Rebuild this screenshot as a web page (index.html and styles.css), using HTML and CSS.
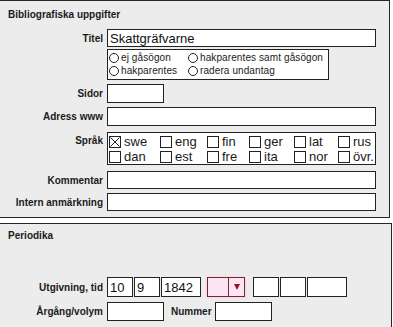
FILE: index.html
```html
<!DOCTYPE html>
<html lang="sv">
<head>
<meta charset="utf-8">
<title>Bibliografiska uppgifter</title>
<link rel="stylesheet" href="styles.css">
</head>
<body>
<section class="panel panel-biblio">
  <h2 class="panel-title">Bibliografiska uppgifter</h2>

  <div class="row row-titel">
    <label class="lbl">Titel</label>
    <input class="txt w-full h18" type="text" value="Skattgräfvarne">
  </div>

  <div class="row row-radio">
    <span class="lbl"></span>
    <div class="optbox radios">
      <label class="opt"><span class="radio"></span>ej gåsögon</label>
      <label class="opt"><span class="radio"></span>hakparentes samt gåsögon</label>
      <label class="opt"><span class="radio"></span>hakparentes</label>
      <label class="opt"><span class="radio"></span>radera undantag</label>
    </div>
  </div>

  <div class="row row-sidor">
    <label class="lbl">Sidor</label>
    <input class="txt w-sm h19" type="text" value="">
  </div>

  <div class="row row-adress">
    <label class="lbl">Adress www</label>
    <input class="txt w-full h19" type="text" value="">
  </div>

  <div class="row row-sprak">
    <label class="lbl lbl-top">Språk</label>
    <div class="optbox langs">
      <label class="lang"><span class="cb checked"><svg viewBox="0 0 10 10" width="10" height="10"><path d="M0.5 0.5 L9.5 9.5 M9.5 0.5 L0.5 9.5" stroke="#222" stroke-width="1" fill="none"/></svg></span>swe</label>
      <label class="lang"><span class="cb"></span>eng</label>
      <label class="lang"><span class="cb"></span>fin</label>
      <label class="lang"><span class="cb"></span>ger</label>
      <label class="lang"><span class="cb"></span>lat</label>
      <label class="lang"><span class="cb"></span>rus</label>
      <label class="lang"><span class="cb"></span>dan</label>
      <label class="lang"><span class="cb"></span>est</label>
      <label class="lang"><span class="cb"></span>fre</label>
      <label class="lang"><span class="cb"></span>ita</label>
      <label class="lang"><span class="cb"></span>nor</label>
      <label class="lang"><span class="cb"></span>övr.</label>
    </div>
  </div>

  <div class="row row-komm">
    <label class="lbl">Kommentar</label>
    <input class="txt w-full h18" type="text" value="">
  </div>

  <div class="row row-intern">
    <label class="lbl">Intern anmärkning</label>
    <input class="txt w-full h18" type="text" value="">
  </div>
</section>

<section class="panel panel-period">
  <h2 class="panel-title">Periodika</h2>

  <div class="row row-utg">
    <label class="lbl">Utgivning, tid</label>
    <input class="txt h20 w-d" type="text" value="10">
    <input class="txt h20 w-d gap1" type="text" value="9">
    <input class="txt h20 w-y gap1" type="text" value="1842">
    <div class="dd">
      <span class="dd-val"></span>
      <span class="dd-btn"><span class="arrow"></span></span>
    </div>
    <input class="txt h20 w-d gap8" type="text" value="">
    <input class="txt h20 w-d gap1" type="text" value="">
    <input class="txt h20 w-y gap1" type="text" value="">
  </div>

  <div class="row row-arg">
    <label class="lbl">Årgång/volym</label>
    <input class="txt w-sm h19" type="text" value="">
    <label class="lbl-inline">Nummer</label>
    <input class="txt w-sm h19" type="text" value="">
  </div>
</section>
</body>
</html>
```

FILE: styles.css
```css
* {
  box-sizing: border-box;
}

body {
  margin: 0;
  background: #ffffff;
  font-family: "Liberation Sans", Arial, sans-serif;
  color: #1a1a1a;
}

.panel {
  background: #ececec;
  border: 1px solid #262626;
  border-left: none;
}

.panel-biblio {
  width: 390px;
  padding-bottom: 6px;
}

.panel-period {
  width: 392px;
  margin-top: 5px;
  padding-bottom: 12px;
}

.panel-title {
  margin: 8px 0 0 8px;
  font-size: 10px;
  line-height: 12px;
  font-weight: bold;
}

.panel-period .panel-title {
  margin-top: 6px;
}

.row {
  display: flex;
  align-items: center;
}

.lbl {
  flex: none;
  width: 107px;
  padding-right: 4px;
  text-align: right;
  font-size: 10px;
  font-weight: bold;
}

.lbl-top {
  align-self: flex-start;
  margin-top: 1px;
  line-height: 15px;
}

.lbl-inline {
  margin: 0 3px 0 7px;
  font-size: 10px;
  font-weight: bold;
}

.txt {
  flex: none;
  border: 1px solid #222;
  border-radius: 0;
  background: #fff;
  padding: 0 2px;
  margin: 0;
  font: 13px "Liberation Sans", Arial, sans-serif;
  color: #111;
  outline: none;
}

.h18 { height: 18px; }
.h19 { height: 19px; }
.h20 { height: 20px; }

.w-full { width: 269px; }
.w-sm { width: 57px; }
.w-d { width: 26px; }
.w-y { width: 40px; }

.gap1 { margin-left: 1px; }
.gap8 { margin-left: 8px; }

/* row spacing, biblio panel */
.row-titel { margin-top: 8px; }
.row-radio { margin-top: 2px; }
.row-sidor { margin-top: 4px; }
.row-adress { margin-top: 4px; }
.row-sprak { margin-top: 6px; }
.row-komm { margin-top: 6px; }
.row-intern { margin-top: 4px; }

/* row spacing, periodika panel */
.row-utg { margin-top: 35px; }
.row-arg { margin-top: 5px; }

.optbox {
  border: 1px solid #222;
  background: #fff;
}

.radios {
  width: 222px;
  height: 31px;
  padding: 1px 0 0 1px;
  display: grid;
  grid-template-columns: 79px auto;
  grid-auto-rows: 13px;
  font-size: 10px;
  line-height: 13px;
  letter-spacing: 0.1px;
}

.opt {
  display: flex;
  align-items: center;
  white-space: nowrap;
}

.radio {
  flex: none;
  width: 10px;
  height: 10px;
  border: 1px solid #222;
  border-radius: 50%;
  background: #fff;
  margin-right: 2px;
}

.langs {
  width: 269px;
  height: 33px;
  padding: 1px 0 0 1px;
  display: grid;
  grid-template-columns: 51px 47px 42px 45px 44px auto;
  grid-auto-rows: 15px;
  font-size: 13px;
  line-height: 15px;
}

.lang {
  display: flex;
  align-items: center;
  white-space: nowrap;
}

.cb {
  flex: none;
  width: 12px;
  height: 12px;
  border: 1px solid #222;
  background: #fff;
  margin-right: 3px;
  display: flex;
}

.cb svg {
  display: block;
}

.dd {
  flex: none;
  display: flex;
  width: 38px;
  height: 20px;
  margin-left: 6px;
  border: 1px solid #7a2434;
  background: #fce4f5;
  box-shadow: 0 0 2px #f2bcd8;
}

.dd-val {
  flex: 1;
}

.dd-btn {
  flex: none;
  width: 16px;
  border-left: 1px solid #7a2434;
  display: flex;
  align-items: center;
  justify-content: center;
}

.arrow {
  width: 0;
  height: 0;
  border-left: 3.5px solid transparent;
  border-right: 3.5px solid transparent;
  border-top: 6px solid #9a1026;
}
```
